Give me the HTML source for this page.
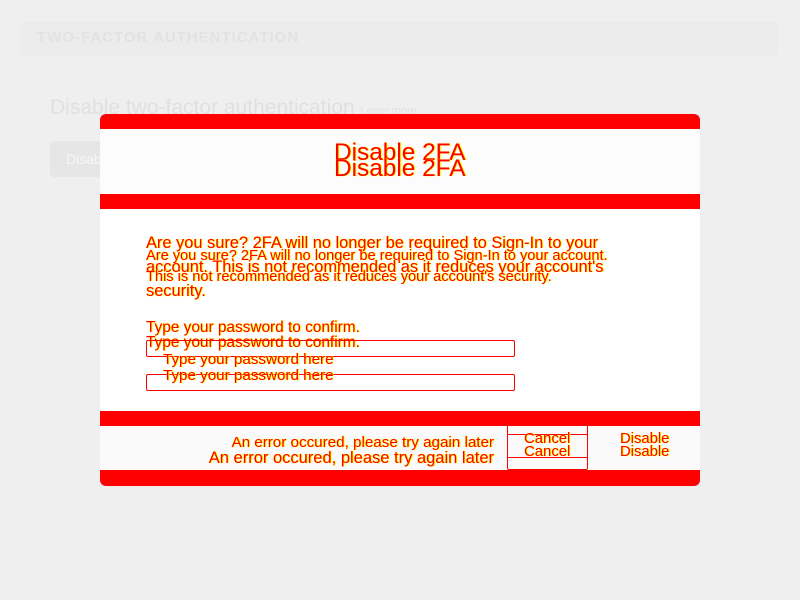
<!DOCTYPE html>
<html><head><style>
body{margin:0;width:800px;height:600px;background:#efefef;font-family:"Liberation Sans",sans-serif;position:relative;overflow:hidden}
.a{position:absolute;white-space:nowrap}
.r{color:#f00;text-shadow:0 0 1px #ff0,1px 0 0 #ff0}
.band{position:absolute;left:100px;width:600px;background:#f00}
</style></head><body>
<div class="a" style="left:20px;top:22px;width:758px;height:34px;background:#ececec;border-radius:4px"></div>
<div class="a" style="left:37px;top:29px;font-size:15px;font-weight:bold;letter-spacing:1px;color:#e2e2e2">TWO-FACTOR AUTHENTICATION</div>
<div class="a" style="left:50px;top:96px;font-size:21px;color:#e0e0e0">Disable two-factor authentication <span style="font-size:11px">Learn more</span></div>
<div class="a" style="left:50px;top:141px;width:60px;height:36px;background:#e6e6e6;border-radius:4px;color:#f6f6f6;font-size:14px;line-height:36px;padding-left:16px">Disab</div>

<div class="a" style="left:100px;top:114px;width:600px;height:372px;border-radius:6px;overflow:hidden;background:#fff"></div>
<div class="band" style="top:114px;height:15px;border-radius:6px 6px 0 0"></div>
<div class="a" style="left:100px;top:129px;width:600px;height:65px;background:#fcfcfc"></div>
<div class="band" style="top:194px;height:15px"></div>
<div class="band" style="top:411px;height:15px"></div>
<div class="a" style="left:100px;top:426px;width:600px;height:44px;background:#fafafa"></div>
<div class="band" style="top:470px;height:16px;border-radius:0 0 6px 6px"></div>

<div class="a r" style="left:334px;top:139px;font-size:24.4px">Disable 2FA</div>
<div class="a r" style="left:334px;top:155px;font-size:24.4px">Disable 2FA</div>

<div class="a r" style="left:146px;top:231px;font-size:16.4px;line-height:24px;white-space:normal;width:472px">Are you sure? 2FA will no longer be required to Sign-In to your account. This is not recommended as it reduces your account's security.</div>
<div class="a r" style="left:146px;top:246px;font-size:14.6px;line-height:21px;white-space:normal;width:492px">Are you sure? 2FA will no longer be required to Sign-In to your account. This is not recommended as it reduces your account's security.</div>

<div class="a r" style="left:146px;top:319px;font-size:15.4px">Type your password to confirm.</div>
<div class="a r" style="left:146px;top:334px;font-size:15.4px">Type your password to confirm.</div>
<div class="a" style="left:146px;top:340px;width:367px;height:15px;border:1px solid #f00;border-radius:2px"></div>
<div class="a" style="left:146px;top:374px;width:367px;height:15px;border:1px solid #f00;border-radius:2px"></div>
<div class="a r" style="left:163px;top:351px;font-size:15.2px">Type your password here</div>
<div class="a r" style="left:163px;top:367px;font-size:15.2px">Type your password here</div>

<div class="a r" style="right:306px;top:434px;font-size:15.2px">An error occured, please try again later</div>
<div class="a r" style="right:306px;top:449px;font-size:16.5px">An error occured, please try again later</div>
<div class="a" style="left:507px;top:424px;width:79px;height:44px;border:1px solid #f00;border-radius:2px"></div>
<div class="a" style="left:507px;top:434px;width:80px;height:22px;border-top:1px solid #f00;border-bottom:1px solid #f00"></div>
<div class="a r" style="left:524px;top:431px;font-size:14.9px">Cancel</div>
<div class="a r" style="left:524px;top:444px;font-size:14.9px">Cancel</div>
<div class="a r" style="left:620px;top:431px;font-size:14.8px">Disable</div>
<div class="a r" style="left:620px;top:444px;font-size:14.8px">Disable</div>
</body></html>
